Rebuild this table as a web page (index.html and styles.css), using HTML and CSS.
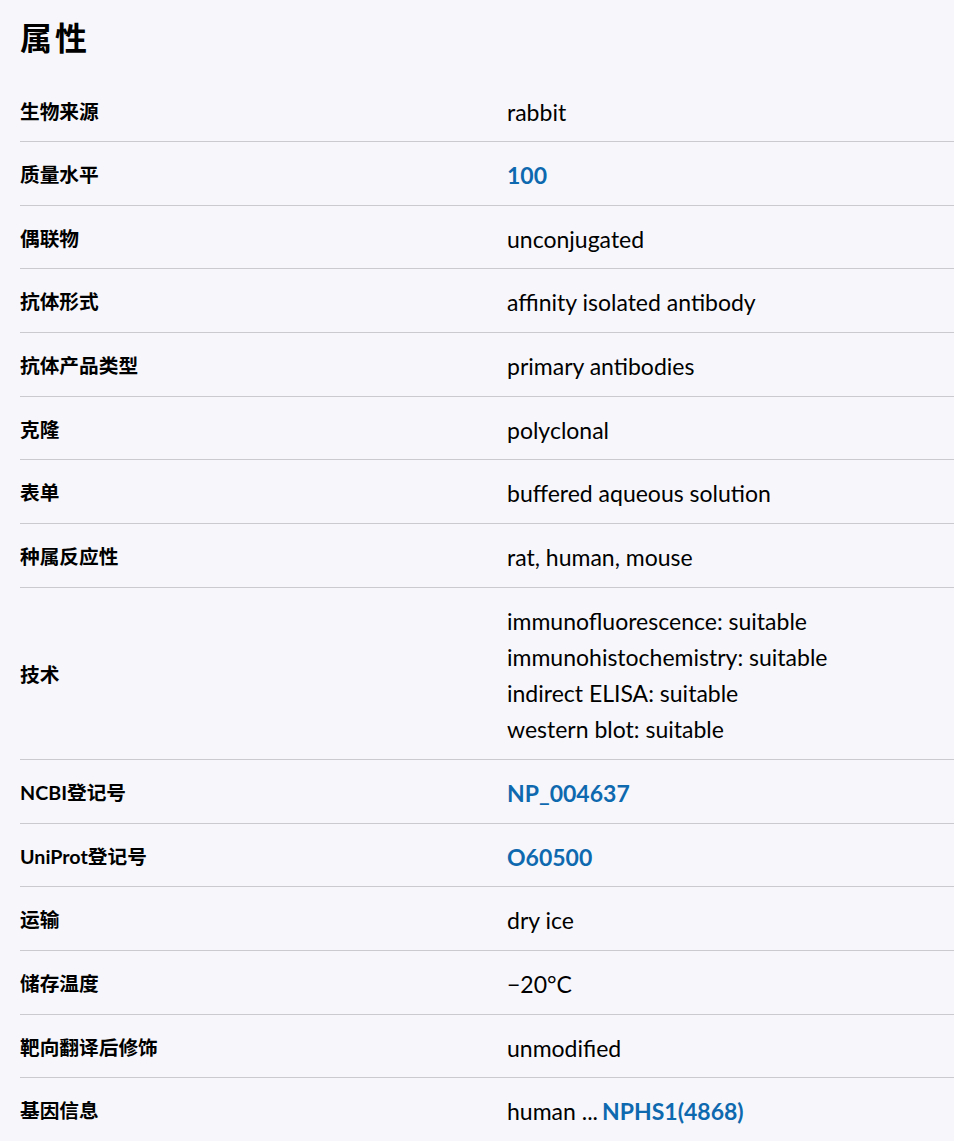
FILE: index.html
```html
<!DOCTYPE html>
<html lang="zh-CN">
<head>
<meta charset="utf-8">
<title>属性</title>
<link rel="stylesheet" href="styles.css">
</head>
<body>
<section class="props">
  <h2 class="props-title">属性</h2>
  <div class="props-table">
    <div class="row"><div class="label">生物来源</div><div class="value">rabbit</div></div>
    <div class="row"><div class="label">质量水平</div><div class="value"><a class="link" href="#">100</a></div></div>
    <div class="row"><div class="label">偶联物</div><div class="value">unconjugated</div></div>
    <div class="row"><div class="label">抗体形式</div><div class="value">affinity isolated antibody</div></div>
    <div class="row"><div class="label">抗体产品类型</div><div class="value">primary antibodies</div></div>
    <div class="row"><div class="label">克隆</div><div class="value">polyclonal</div></div>
    <div class="row"><div class="label">表单</div><div class="value">buffered aqueous solution</div></div>
    <div class="row"><div class="label">种属反应性</div><div class="value">rat, human, mouse</div></div>
    <div class="row"><div class="label">技术</div><div class="value">immunofluorescence: suitable<br>immunohistochemistry: suitable<br>indirect ELISA: suitable<br>western blot: suitable</div></div>
    <div class="row"><div class="label">NCBI登记号</div><div class="value"><a class="link" href="#">NP_004637</a></div></div>
    <div class="row"><div class="label">UniProt登记号</div><div class="value"><a class="link" href="#">O60500</a></div></div>
    <div class="row"><div class="label">运输</div><div class="value">dry ice</div></div>
    <div class="row"><div class="label">储存温度</div><div class="value">−20°C</div></div>
    <div class="row"><div class="label">靶向翻译后修饰</div><div class="value">unmodified</div></div>
    <div class="row last"><div class="label">基因信息</div><div class="value">human ...<a class="link gene" href="#">NPHS1(4868)</a></div></div>
  </div>
</section>
</body>
</html>
```

FILE: styles.css
```css
html, body {
  margin: 0;
  padding: 0;
  background: #f7f7fb;
}
body {
  font-family: Lato, "Noto Sans CJK SC", sans-serif;
  color: #000;
}
.props {
  padding: 0 0 0 20px;
}
.props-title {
  margin: 0;
  padding: 18px 0 20.5px;
  font-size: 32px;
  line-height: 40px;
  font-weight: 700;
  letter-spacing: 3px;
}
.props-table {
  display: flex;
  flex-direction: column;
}
.row {
  display: grid;
  grid-template-columns: 487px 1fr;
  align-items: center;
  padding: 15px 0 11.3px;
  border-bottom: 1px solid #cbcbcf;
}
.row.last {
  border-bottom: none;
}
.label {
  font-size: 19.7px;
  font-weight: 700;
  line-height: 36.33px;
}
.value {
  font-size: 23px;
  line-height: 36.33px;
}
.link {
  color: #0f69af;
  font-weight: 700;
  text-decoration: none;
}
.gene {
  margin-left: 4px;
}
```
